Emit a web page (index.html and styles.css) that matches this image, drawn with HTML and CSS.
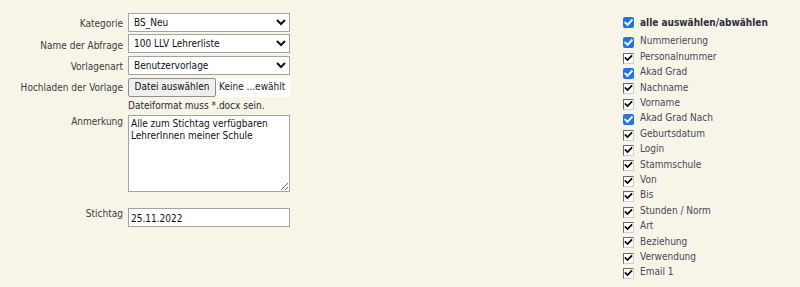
FILE: index.html
```html
<!DOCTYPE html>
<html lang="de">
<head>
<meta charset="utf-8">
<title>Abfrage</title>
<link rel="stylesheet" href="styles.css">
</head>
<body>
<div class="page">
  <form class="form">
    <label class="lbl l-sel">Kategorie</label>
    <select class="field sel"><option>BS_Neu</option></select>

    <label class="lbl l-sel">Name der Abfrage</label>
    <select class="field sel"><option>100 LLV Lehrerliste</option></select>

    <label class="lbl l-sel">Vorlagenart</label>
    <select class="field sel"><option>Benutzervorlage</option></select>

    <label class="lbl l-file">Hochladen der Vorlage</label>
    <div class="field file"><span class="fbtn">Datei auswählen</span><span class="fname">Keine ...ewählt</span></div>

    <span></span>
    <div class="hint">Dateiformat muss *.docx sein.</div>

    <label class="lbl l-ta">Anmerkung</label>
    <textarea class="field ta">Alle zum Stichtag verfügbaren
LehrerInnen meiner Schule</textarea>

    <label class="lbl l-date">Stichtag</label>
    <input class="field date" type="text" value="25.11.2022">
  </form>

  <div class="cols">
    <div class="row head"><span class="cb blue"><svg viewBox="0 0 11 11"><path d="M2.3 5.6 L4.5 7.8 L8.8 3.2"/></svg></span><b>alle auswählen/abwählen</b></div>
    <ul class="list">
      <li class="row"><span class="cb blue"><svg viewBox="0 0 11 11"><path d="M2.3 5.6 L4.5 7.8 L8.8 3.2"/></svg></span>Nummerierung</li>
      <li class="row"><span class="cb old"><svg viewBox="0 0 9 9"><path d="M1.5 4 L3.5 6 L7.5 2"/></svg></span>Personalnummer</li>
      <li class="row"><span class="cb blue"><svg viewBox="0 0 11 11"><path d="M2.3 5.6 L4.5 7.8 L8.8 3.2"/></svg></span>Akad Grad</li>
      <li class="row"><span class="cb old"><svg viewBox="0 0 9 9"><path d="M1.5 4 L3.5 6 L7.5 2"/></svg></span>Nachname</li>
      <li class="row"><span class="cb old"><svg viewBox="0 0 9 9"><path d="M1.5 4 L3.5 6 L7.5 2"/></svg></span>Vorname</li>
      <li class="row"><span class="cb blue"><svg viewBox="0 0 11 11"><path d="M2.3 5.6 L4.5 7.8 L8.8 3.2"/></svg></span>Akad Grad Nach</li>
      <li class="row"><span class="cb old"><svg viewBox="0 0 9 9"><path d="M1.5 4 L3.5 6 L7.5 2"/></svg></span>Geburtsdatum</li>
      <li class="row"><span class="cb old"><svg viewBox="0 0 9 9"><path d="M1.5 4 L3.5 6 L7.5 2"/></svg></span>Login</li>
      <li class="row"><span class="cb old"><svg viewBox="0 0 9 9"><path d="M1.5 4 L3.5 6 L7.5 2"/></svg></span>Stammschule</li>
      <li class="row"><span class="cb old"><svg viewBox="0 0 9 9"><path d="M1.5 4 L3.5 6 L7.5 2"/></svg></span>Von</li>
      <li class="row"><span class="cb old"><svg viewBox="0 0 9 9"><path d="M1.5 4 L3.5 6 L7.5 2"/></svg></span>Bis</li>
      <li class="row"><span class="cb old"><svg viewBox="0 0 9 9"><path d="M1.5 4 L3.5 6 L7.5 2"/></svg></span>Stunden / Norm</li>
      <li class="row"><span class="cb old"><svg viewBox="0 0 9 9"><path d="M1.5 4 L3.5 6 L7.5 2"/></svg></span>Art</li>
      <li class="row"><span class="cb old"><svg viewBox="0 0 9 9"><path d="M1.5 4 L3.5 6 L7.5 2"/></svg></span>Beziehung</li>
      <li class="row"><span class="cb old"><svg viewBox="0 0 9 9"><path d="M1.5 4 L3.5 6 L7.5 2"/></svg></span>Verwendung</li>
      <li class="row"><span class="cb old"><svg viewBox="0 0 9 9"><path d="M1.5 4 L3.5 6 L7.5 2"/></svg></span>Email 1</li>
    </ul>
  </div>
</div>
</body>
</html>
```

FILE: styles.css
```css
html, body {
  margin: 0;
  padding: 0;
  background: #f7f4e8;
  height: 100%;
  overflow: hidden;
}
body {
  font-family: "DejaVu Sans Condensed", "DejaVu Sans", sans-serif;
  font-size: 10px;
  line-height: 12px;
  color: #3a3a3a;
}
.page {
  display: flex;
  align-items: flex-start;
}
.form {
  display: grid;
  grid-template-columns: 123px 162px;
  column-gap: 5px;
  row-gap: 2.65px;
  align-items: start;
  margin-top: 12.7px;
}
.lbl {
  text-align: right;
  color: #3c3c3c;
  white-space: nowrap;
}
.l-sel { padding-top: 5.5px; }
.l-file { padding-top: 4.5px; }
.l-ta { padding-top: 1.2px; }
.l-date { padding-top: 0; margin-top: 13px; }

.field {
  box-sizing: border-box;
  width: 162px;
  font-family: inherit;
  font-size: 10px;
  color: #111;
  background: #fff;
  margin: 0;
}
.sel {
  height: 19px;
  border: 1px solid #a3a3a3;
  border-radius: 0;
  padding: 0 0 0 1px;
}
.file {
  height: 19px;
  display: flex;
  align-items: center;
  gap: 3px;
}
.fbtn {
  box-sizing: border-box;
  height: 19px;
  width: 88px;
  display: flex;
  align-items: center;
  justify-content: center;
  background: #efefef;
  border: 1px solid #8f8f8f;
  border-radius: 2px;
  color: #111;
}
.fname {
  color: #222;
  white-space: nowrap;
}
.hint {
  padding-top: 1px;
  color: #2a2a2a;
}
.ta {
  height: 77px;
  border: 1px solid #a3a3a3;
  padding: 2px 2px;
  line-height: 12px;
  resize: both;
  overflow: hidden;
}
.date {
  height: 19px;
  margin-top: 13px;
  border: 1px solid #a3a3a3;
  padding: 2px 2px 0;
}

.cols {
  margin-left: auto;
  width: 177.3px;
  padding-top: 14px;
  color: #48485a;
}
.row {
  box-sizing: border-box;
  display: flex;
  align-items: flex-start;
  height: 15.4px;
  padding-top: 1.8px;
}
.head {
  padding-top: 3px;
}
.head b {
  color: #2e2e3a;
}
.head .cb {
  margin-top: -0.3px;
}
.list {
  list-style: none;
  margin: 4.3px 0 0;
  padding: 0;
}
.list .cb {
  margin-top: 1.8px;
}
.cb {
  box-sizing: border-box;
  flex: none;
  width: 11px;
  height: 11px;
  margin-right: 6.3px;
  display: flex;
  align-items: center;
  justify-content: center;
}
.cb svg {
  display: block;
  fill: none;
  stroke-linecap: square;
}
.cb.blue {
  background: #1f74e8;
  border-radius: 2px;
}
.cb.blue svg {
  width: 11px;
  height: 11px;
  stroke: #fff;
  stroke-width: 1.9;
}
.cb.old {
  background: #fff;
  border: 1px solid;
  border-color: #6a6a6a #cfcfcf #cfcfcf #6a6a6a;
}
.cb.old svg {
  width: 9px;
  height: 9px;
  stroke: #000;
  stroke-width: 1.7;
}
```
